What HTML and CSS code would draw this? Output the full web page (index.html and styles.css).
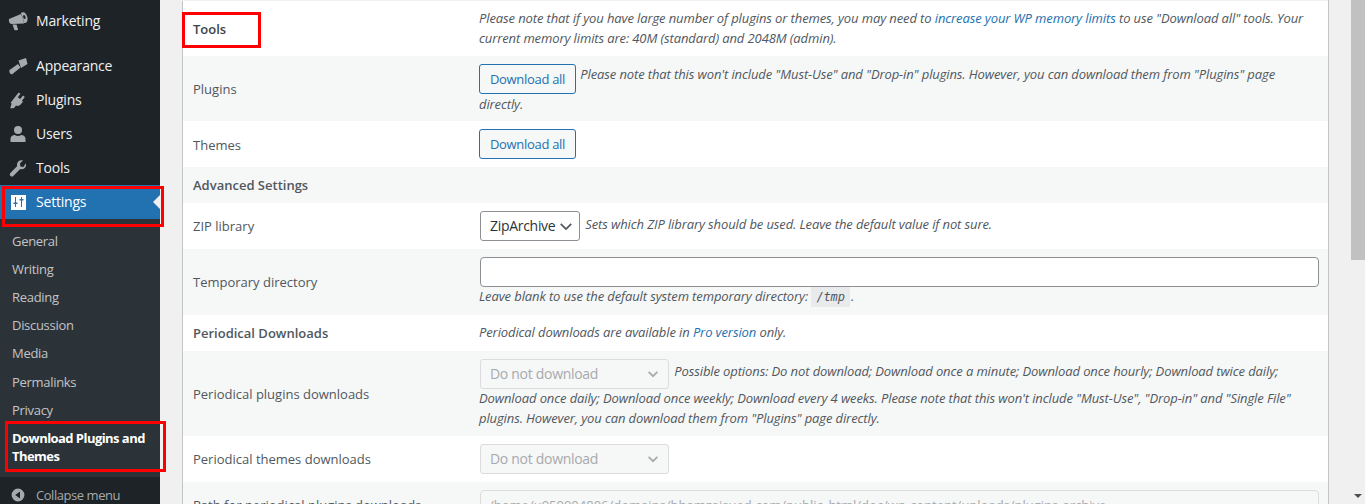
FILE: index.html
```html
<!DOCTYPE html>
<html lang="en">
<head>
  <meta charset="UTF-8" />
  <title>Download Plugins and Themes</title>
  <link rel="stylesheet" href="styles.css">
</head>
<body>
  <div class="page">
    <nav class="sidebar">
      <ul class="menu">
        <li class="menu-item">
          <svg class="menu-icon" viewBox="0 0 20 20"><path d="M1 8 13 3c1.500 3 2.500 6 3 9.500L3.500 13C1.500 13 .5 10 1 8z"/><path fill-rule="evenodd" d="M14.500 1.300c1.900-.5 4 1.500 4.800 4.500s0 5.700-1.900 6.200c-.5.100-1 0-1.500-.2-.5-3.500-1.500-6.700-3-9.500.4-.5 1-.9 1.600-1zM15.800 4c-.6.200-.9 1.200-.6 2.300s1.100 1.800 1.700 1.700c.6-.2.9-1.200.6-2.300S16.400 3.800 15.800 4z"/><path d="M4.500 13.500h4L10 18.300c.1.500-.3.900-.8.900H7c-.4 0-.7-.2-.8-.6z"/></svg>
          Marketing
        </li>
        <li class="menu-sep"></li>
        <li class="menu-item">
          <svg class="menu-icon" viewBox="0 0 20 20"><path d="M10.500 4.500 18 2l1.500 6L13 12z"/><path d="M1.500 14 10 8l2.500 3.500-8 6.500c-1 .5-1.800.2-2.400-.6-.7-1-.9-2.400-.6-3.400z"/></svg>
          Appearance
        </li>
        <li class="menu-item">
          <svg class="menu-icon" viewBox="0 0 20 20"><path d="M13.100 1.500l1.900 1.300-2.700 3.500 2.400 1.800 2.800-3.500 1.800 1.400-2.900 3.700 1.100.9-.9 1.100-1.500 1.800c-1.200 1.500-3 1.700-4.500 1l-2.300 2.700-3.600.1 1.400-4.800-1-.8 1-1.100 1.400-1.800-.1-.1z" transform="translate(-2.500 1)"/></svg>
          Plugins
        </li>
        <li class="menu-item">
          <svg class="menu-icon" viewBox="0 0 20 20"><circle cx="10" cy="6" r="4"/><path d="M2.500 18v-3.200c0-2.300 2-3.800 4.300-3.800 1 .7 2 1 3.200 1s2.200-.3 3.200-1c2.300 0 4.300 1.500 4.300 3.800V18z"/></svg>
          Users
        </li>
        <li class="menu-item">
          <svg class="menu-icon" viewBox="0 0 20 20"><path d="M17.800 5.200c.6 1.700.2 3.500-1 4.800-1.300 1.200-3 1.600-4.600 1.100l-6.900 6.800c-.8.800-2.100.8-2.900 0s-.8-2.100 0-2.900L9.200 8.100c-.5-1.600-.1-3.400 1.100-4.600 1.300-1.300 3.100-1.600 4.700-1l-3.100 3 .6 2.900 2.900.6z"/></svg>
          Tools
        </li>
        <li class="menu-item is-current marked-settings">
          <svg class="menu-icon" viewBox="0 0 20 20"><path fill-rule="evenodd" d="M3 3h15v15H3zM7 5v5.500H5.500V12H7v3h1v-3h1.500v-1.500H8V5zM13 5v2h-1.500v1.500H13V15h1V8.500h1.500V7H14V5z"/></svg>
          Settings
        </li>
        <li>
          <ul class="submenu">
            <li>General</li>
            <li>Writing</li>
            <li>Reading</li>
            <li>Discussion</li>
            <li>Media</li>
            <li>Permalinks</li>
            <li>Privacy</li>
            <li class="is-active marked-download">Download Plugins and Themes</li>
          </ul>
        </li>
        <li class="collapse">
          <svg class="menu-icon" viewBox="0 0 20 20"><path fill-rule="evenodd" d="M10 2a8 8 0 1 1 0 16 8 8 0 0 1 0-16zM12.500 5.500 6.500 10l6 4.500z"/></svg>
          Collapse menu
        </li>
      </ul>
    </nav>

    <main class="content">
      <table class="settings">
        <tr>
          <th class="strong marked-tools"><span>Tools</span></th>
          <td class="note">Please note that if you have large number of plugins or themes, you may need to <a>increase your WP memory limits</a> to use "Download all" tools. Your current memory limits are: 40M (standard) and 2048M (admin).</td>
        </tr>
        <tr>
          <th>Plugins</th>
          <td class="note tight"><button class="btn">Download all</button> Please note that this won't include "Must-Use" and "Drop-in" plugins. However, you can download them from "Plugins" page directly.</td>
        </tr>
        <tr>
          <th class="low">Themes</th>
          <td><button class="btn">Download all</button></td>
        </tr>
        <tr>
          <th class="strong">Advanced Settings</th>
          <td></td>
        </tr>
        <tr>
          <th>ZIP library</th>
          <td class="note"><span class="select select-zip">ZipArchive<svg viewBox="0 0 16 16"><path d="M2 5.500l6 6 6-6"/></svg></span> Sets which ZIP library should be used. Leave the default value if not sure.</td>
        </tr>
        <tr>
          <th>Temporary directory</th>
          <td class="note"><input class="field" type="text"><br>Leave blank to use the default system temporary directory: <code>/tmp</code> .</td>
        </tr>
        <tr>
          <th class="strong">Periodical Downloads</th>
          <td class="note">Periodical downloads are available in <a>Pro version</a> only.</td>
        </tr>
        <tr>
          <th>Periodical plugins downloads</th>
          <td class="note"><span class="select is-disabled">Do not download<svg viewBox="0 0 16 16"><path d="M3 5.500l5 5 5-5"/></svg></span> Possible options: Do not download; Download once a minute; Download once hourly; Download twice daily; Download once daily; Download once weekly; Download every 4 weeks. Please note that this won't include "Must-Use", "Drop-in" and "Single File" plugins. However, you can download them from "Plugins" page directly.</td>
        </tr>
        <tr>
          <th>Periodical themes downloads</th>
          <td><span class="select is-disabled">Do not download<svg viewBox="0 0 16 16"><path d="M3 5.500l5 5 5-5"/></svg></span></td>
        </tr>
        <tr>
          <th>Path for periodical plugins downloads</th>
          <td><input class="field is-disabled" type="text" disabled value="/home/u959904806/domains/bhamzaisued.com/public_html/doc/wp-content/uploads/plugins-archive"></td>
        </tr>
      </table>
    </main>

    <div class="scrollbar">
      <div class="scroll-thumb"></div>
      <div class="scroll-arrow"></div>
    </div>
  </div>
</body>
</html>
```

FILE: styles.css
```css
html, body {
  margin: 0;
  height: 504px;
  overflow: hidden;
}

body {
  font-family: 'Open Sans', 'Noto Sans', sans-serif;
  font-size: 13px;
  line-height: 1.5;
  color: #50575e;
  background: #f0f0f1;
}

.page {
  display: flex;
  height: 504px;
}

/* sidebar */
.sidebar {
  flex: 0 0 160px;
  background: #1d2327;
  color: #f0f0f1;
}

.menu, .submenu {
  list-style: none;
  margin: 0;
  padding: 0;
}

.menu {
  padding-top: 4px;
}

.menu-item {
  display: flex;
  align-items: center;
  box-sizing: border-box;
  height: 34px;
  padding: 0 0 1px 8px;
  font-size: 14px;
  letter-spacing: -0.2px;
  color: #f0f0f1;
}

.menu-sep {
  height: 11px;
}

.menu-icon {
  flex: none;
  width: 20px;
  height: 20px;
  margin-right: 8px;
  fill: #a7aaad;
}

.is-current {
  position: relative;
  background: #2271b1;
  color: #fff;
}

.is-current .menu-icon {
  fill: #fff;
}

.is-current::before {
  content: '';
  position: absolute;
  right: 0;
  top: 10px;
  border: 7px solid transparent;
  border-right-color: #f0f0f1;
  border-left: 0;
}

.submenu {
  background: #2c3338;
  padding: 7.600px 0 6.400px;
}

.submenu li {
  padding: 5px 12px;
  line-height: 18.2px;
  letter-spacing: -0.3px;
  color: #c3c4c7;
}

.submenu .is-active {
  color: #fff;
  font-weight: 700;
  letter-spacing: -0.55px;
}

.collapse {
  display: flex;
  align-items: center;
  box-sizing: border-box;
  height: 34px;
  padding: 3px 0 0 10px;
  letter-spacing: -0.45px;
  color: #a7aaad;
}

.collapse .menu-icon {
  width: 16px;
  height: 16px;
  margin-right: 10px;
}

/* red marks drawn over the screenshot */
.marked-settings::after,
.marked-download::after,
.marked-tools span::after {
  content: '';
  position: absolute;
  border: 3px solid #f00;
  box-sizing: border-box;
  pointer-events: none;
}

.marked-settings::after {
  left: 2px;
  top: 1px;
  width: 162px;
  height: 41px;
}

.marked-download {
  position: relative;
}

.marked-download::after {
  left: 5px;
  top: -3px;
  width: 161px;
  height: 51px;
}

.marked-tools span {
  position: relative;
}

.marked-tools span::after {
  left: -11px;
  top: -8px;
  width: 79px;
  height: 36px;
}

/* settings table */
.content {
  flex: 1;
  margin: 0 22px 0 22px;
  min-width: 0;
}

.settings {
  width: 100%;
  table-layout: fixed;
  border-collapse: collapse;
  background: #fff;
  border-left: 1px solid #c3c4c7;
  border-right: 1px solid #c3c4c7;
  border-top: 1px solid #f0f0f1;
}

.settings tr:nth-child(even) {
  background: #f6f7f7;
}

.settings th {
  width: 276px;
  padding: 9px 10px 7px;
  font-weight: 400;
  text-align: left;
  vertical-align: middle;
}

.settings th.low {
  padding: 10px 10px 6px;
}

.settings th.strong {
  padding: 8px 10px;
  font-weight: 600;
  line-height: 20px;
}

.marked-tools {
  color: #3c434a;
}

.settings td {
  padding: 8px 9px 8px 0;
  vertical-align: middle;
}

.settings td.tight {
  padding-bottom: 7px;
  line-height: 20px;
}

.note {
  font-style: italic;
  letter-spacing: -0.11px;
}

.note a, .btn {
  color: #2271b1;
}

.btn {
  height: 30px;
  width: 97px;
  margin-right: 1px;
  padding: 0;
  vertical-align: top;
  font: 13px 'Open Sans', 'Noto Sans', sans-serif;
  letter-spacing: -0.3px;
  background: #f6f7f7;
  border: 1px solid #2271b1;
  border-radius: 3px;
}

.select {
  display: inline-flex;
  align-items: center;
  justify-content: space-between;
  box-sizing: border-box;
  width: 189px;
  height: 30px;
  margin: 0 2px 0 1px;
  padding: 0 8px 2px 9px;
  font-size: 14px;
  font-style: normal;
  letter-spacing: -0.3px;
  vertical-align: -3px;
  color: #2c3338;
  background: #fff;
  border: 1px solid #8c8f94;
  border-radius: 3px;
}

.select svg {
  width: 14px;
  height: 14px;
  margin-top: 2px;
  fill: none;
  stroke: #50575e;
  stroke-width: 2;
}

.select-zip {
  width: 100px;
  padding-right: 6px;
  vertical-align: -2px;
}

.select.is-disabled {
  color: #a7aaad;
  background: #f6f7f7;
  border-color: #dcdcde;
}

.select.is-disabled svg {
  stroke: #a7aaad;
}

.field {
  box-sizing: border-box;
  display: inline-block;
  width: calc(100% - 1px);
  height: 30px;
  margin: 0 0 0 1px;
  padding: 0 8px;
  font: 13px 'Open Sans', 'Noto Sans', sans-serif;
  background: #fff;
  border: 1px solid #8c8f94;
  border-radius: 4px;
  vertical-align: top;
}

.field.is-disabled {
  color: #a7aaad;
  background: #f6f7f7;
  border-color: #dcdcde;
}

code {
  display: inline-block;
  margin-right: -2px;
  padding: 0 5px;
  line-height: 20px;
  font-family: 'DejaVu Sans Mono', monospace;
  font-size: 12px;
  background: #e9eaeb;
}

/* scrollbar */
.scrollbar {
  flex: 0 0 14px;
  display: flex;
  flex-direction: column;
  align-items: center;
}

.scroll-thumb {
  width: 100%;
  height: 260px;
  background: #c1c1c1;
}

.scroll-arrow {
  margin-top: auto;
  margin-bottom: 6px;
  border: 4px solid transparent;
  border-top: 4px solid #505050;
  border-bottom: 0;
}
```
